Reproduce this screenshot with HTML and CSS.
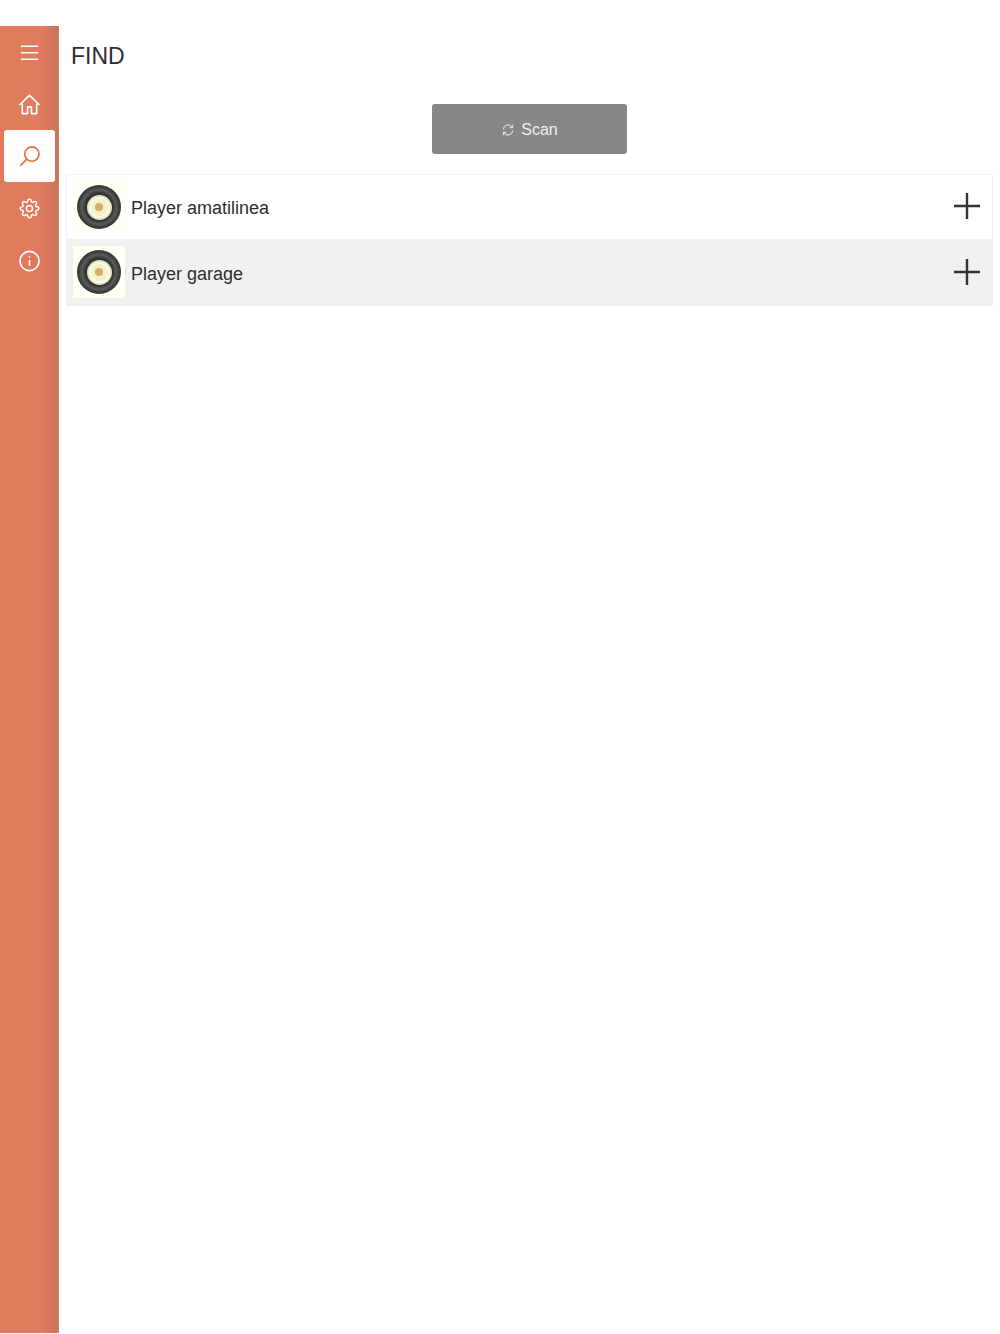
FILE: index.html
```html
<!doctype html>
<html lang="en">
<head>
	<meta charset="UTF-8">
	<title>Find</title>
	<link rel="stylesheet" href="styles.css">
</head>
<body>
	<div class="app">
		<ul class="sidebar">
			<li>
				<svg class="icon" viewBox="0 0 24 24"><path d="M3 5.500h18M3 12.200h18M3 19h18"/></svg>
			</li>
			<li>
				<svg class="icon" viewBox="0 0 24 24"><path d="M1.500 12.500L12 2.500l10.500 10M4.500 11v10.500h5.500v-7h4v7h5.500V11"/></svg>
			</li>
			<li class="sidebar_active">
				<svg class="icon" viewBox="0 0 24 24"><circle cx="14.500" cy="9.500" r="7.500"/><path d="M9 15L2.500 21.500"/></svg>
			</li>
			<li>
				<svg class="icon" viewBox="-1.500 -1.500 27 27"><circle cx="12" cy="12" r="3.600"/><path d="M19.400 15a1.650 1.650 0 0 0 .33 1.820l.06.06a2 2 0 0 1 0 2.830 2 2 0 0 1-2.830 0l-.06-.06a1.650 1.650 0 0 0-1.820-.33 1.650 1.650 0 0 0-1 1.510V21a2 2 0 0 1-2 2 2 2 0 0 1-2-2v-.09A1.650 1.650 0 0 0 9 19.400a1.650 1.650 0 0 0-1.820.33l-.06.06a2 2 0 0 1-2.830 0 2 2 0 0 1 0-2.830l.06-.06a1.650 1.650 0 0 0 .33-1.820 1.650 1.650 0 0 0-1.510-1H3a2 2 0 0 1-2-2 2 2 0 0 1 2-2h.09A1.650 1.650 0 0 0 4.600 9a1.650 1.650 0 0 0-.33-1.820l-.06-.06a2 2 0 0 1 0-2.830 2 2 0 0 1 2.830 0l.06.06a1.650 1.650 0 0 0 1.820.33H9a1.650 1.650 0 0 0 1-1.510V3a2 2 0 0 1 2-2 2 2 0 0 1 2 2v.09a1.650 1.650 0 0 0 1 1.510 1.650 1.650 0 0 0 1.820-.33l.06-.06a2 2 0 0 1 2.830 0 2 2 0 0 1 0 2.830l-.06.06a1.650 1.650 0 0 0-.33 1.820V9a1.650 1.650 0 0 0 1.510 1H21a2 2 0 0 1 2 2 2 2 0 0 1-2 2h-.09a1.650 1.650 0 0 0-1.510 1z"/></svg>
			</li>
			<li>
				<svg class="icon" viewBox="0 0 24 24"><circle cx="12" cy="12.500" r="10"/><path d="M12 11.500v6M12 7.500v1.500"/></svg>
			</li>
		</ul>
		<div class="content">
			<h1 class="title">FIND</h1>
			<div class="scan_wrap">
				<button class="scan">
					<svg class="scan_icon" viewBox="0 0 24 24"><path d="M4 11a8 8 0 0 1 14-5l2 2M20 13a8 8 0 0 1-14 5l-2-2M20 3v5h-5M4 21v-5h5"/></svg>
					Scan
				</button>
			</div>
			<ul class="players">
				<li>
					<div class="thumb"><div class="disc"><div class="disc_label"><div class="disc_hole"></div></div></div></div>
					<span class="name">Player amatilinea</span>
					<svg class="add" viewBox="0 0 26 26"><path d="M13 0v26M0 13h26"/></svg>
				</li>
				<li class="players_alt">
					<div class="thumb"><div class="disc"><div class="disc_label"><div class="disc_hole"></div></div></div></div>
					<span class="name">Player garage</span>
					<svg class="add" viewBox="0 0 26 26"><path d="M13 0v26M0 13h26"/></svg>
				</li>
			</ul>
		</div>
	</div>
</body>
</html>
```

FILE: styles.css
```css
body, div, ul, li, h1{
	margin: 0;
	padding: 0;
}
body{
	background-color: #fff;
	font-family: 'Liberation Sans', Arial, sans-serif;
	color: #2e2e2e;
}
ul{
	list-style: none;
}
.app{
	display: flex;
	height: 1333px;
	padding-top: 26px;
	box-sizing: border-box;
}
.sidebar{
	flex: none;
	width: 59px;
	background: linear-gradient(to right, #e07b5d 0, #e07b5d 42px, #c97459 58px, #e08a70 59px);
}
.sidebar > li{
	display: flex;
	align-items: center;
	justify-content: center;
	height: 52px;
	margin: 0 4px;
	color: #fff;
}
.sidebar > li.sidebar_active{
	background-color: #fff;
	border-radius: 3px;
	color: #f2693d;
}
.icon{
	width: 23px;
	height: 23px;
	fill: none;
	stroke: currentColor;
	stroke-width: 1.700;
	stroke-linejoin: round;
}
.content{
	flex: 1;
	padding: 0 7px;
}
.title{
	height: 60px;
	padding-left: 5px;
	font-size: 23px;
	font-weight: normal;
	line-height: 60px;
}
.scan_wrap{
	display: flex;
	justify-content: center;
	padding: 18px 0 20px;
}
.scan{
	display: flex;
	align-items: center;
	justify-content: center;
	gap: 6px;
	width: 195px;
	height: 50px;
	padding: 1px 0 0;
	border: 0;
	border-radius: 3px;
	background-color: #878787;
	color: #f0f0f0;
	font-family: inherit;
	font-size: 16px;
}
.scan_icon{
	width: 14px;
	height: 14px;
	fill: none;
	stroke: currentColor;
	stroke-width: 1.700;
}
.players > li{
	display: flex;
	align-items: center;
	height: 66px;
	padding: 0 12px 0 6px;
	box-sizing: border-box;
	border: 1px solid #f1f1f1;
}
.players > li.players_alt{
	padding-bottom: 2px;
	background-color: #f1f1f1;
}
.thumb{
	display: flex;
	flex: none;
	align-items: center;
	justify-content: center;
	width: 52px;
	height: 52px;
	background-color: #fffff4;
}
.disc{
	display: flex;
	align-items: center;
	justify-content: center;
	width: 44px;
	height: 44px;
	border-radius: 50%;
	background: radial-gradient(circle closest-side, #333 0, #333 62%, #5a5a5a 78%, #3c3c3c 92%, #363636 100%);
}
.disc_label{
	display: flex;
	align-items: center;
	justify-content: center;
	width: 25px;
	height: 25px;
	border-radius: 50%;
	background: radial-gradient(circle closest-side, #f4f1cc 0, #f4f1cc 66%, #fbfaec 72%, #fbfaec 80%, #e6e3bc 90%);
}
.disc_hole{
	width: 8px;
	height: 8px;
	border-radius: 50%;
	background-color: #d6ae72;
}
.name{
	flex: 1;
	margin-top: 2px;
	margin-left: 6px;
	font-size: 18px;
}
.players_alt .name{
	margin-top: 4px;
}
.add{
	flex: none;
	width: 26px;
	height: 26px;
	margin-bottom: 2px;
	fill: none;
	stroke: #333;
	stroke-width: 2.400;
}
.players_alt .add{
	margin-bottom: 1px;
}
```
